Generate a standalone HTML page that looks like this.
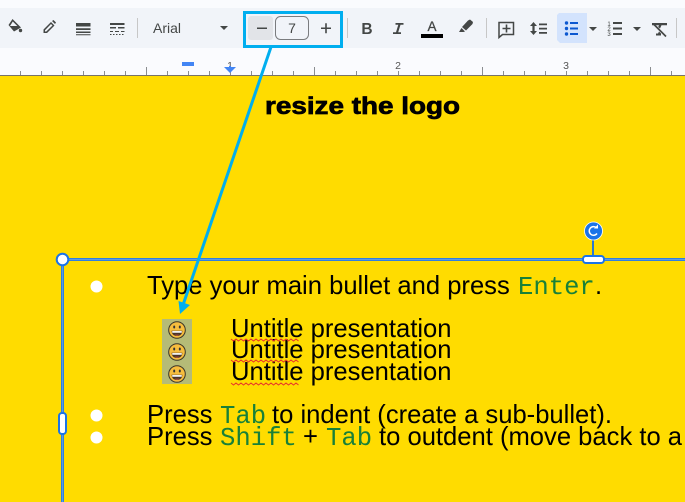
<!DOCTYPE html>
<html><head><meta charset="utf-8"><style>
html,body{margin:0;padding:0;width:685px;height:502px;overflow:hidden;background:#ffdc00}
svg{display:block}
text{font-family:"Liberation Sans",Arial,sans-serif}
.m{font-family:"Liberation Mono",monospace;fill:#188038}
.t{font-size:25.6px;fill:#000}
</style></head><body>
<svg width="685" height="502" viewBox="0 0 685 502" xmlns="http://www.w3.org/2000/svg">
<defs>
<g id="em">
<circle cx="0" cy="0" r="8.300" fill="#f6bd3e" stroke="#3a3428" stroke-width="1"/>
<ellipse cx="-2.800" cy="-3" rx="1" ry="1.500" fill="#333"/><ellipse cx="2.800" cy="-3" rx="1" ry="1.500" fill="#333"/>
<path d="M-5.400 0.800H5.400C5.200 4.400 3 6 0 6S-5.200 4.400-5.400 0.800Z" fill="#4a3528"/>
<path d="M-4.800 1H4.800V2.800H-4.800Z" fill="#f2f2f2"/><path d="M-2.400 4.700H2.400L0 5.800Z" fill="#e0504a"/>
</g>
<path id="sq" fill="none" stroke="#e8342a" stroke-width="1" d="M231 339l2.500 2 2.500-2 2.500 2 2.500-2 2.500 2 2.500-2 2.500 2 2.500-2 2.500 2 2.500-2 2.500 2 2.500-2 2.500 2 2.500-2 2.500 2 2.500-2 2.500 2 2.500-2 2.500 2 2.500-2 2.500 2 2.500-2 2.500 2 2.500-2 2.500 2 2.500-2 2.500 2"/>
</defs>

<!-- chrome -->
<rect width="685" height="8" fill="#fafbfe"/>
<rect y="8" width="685" height="40" fill="#f1f4f9"/>
<rect y="48" width="685" height="27" fill="#fafbfe"/>
<rect y="75" width="685" height="1" fill="#77736a"/>
<rect y="76" width="685" height="426" fill="#ffdc00"/>

<!-- ruler ticks -->
<path stroke="#8a8d90" stroke-width="1" fill="none" d="M20.500 71V75M41.500 71V75M62.500 71V75M83.500 71V75M104.500 71V75M125.500 71V75M146.500 67V75M167.500 71V75M188.500 71V75M209.500 71V75M230.500 71V75M251.500 71V75M272.500 71V75M293.500 71V75M314.500 67V75M335.500 71V75M356.500 71V75M377.500 71V75M398.500 71V75M419.500 71V75M440.500 71V75M461.500 71V75M482.500 67V75M503.500 71V75M524.500 71V75M545.500 71V75M566.500 71V75M587.500 71V75M608.500 71V75M629.500 71V75M650.500 67V75M671.500 71V75"/>
<text x="230" y="69" font-size="10.500" fill="#555" text-anchor="middle">1</text>
<text x="398" y="69" font-size="10.500" fill="#555" text-anchor="middle">2</text>
<text x="566" y="69" font-size="10.500" fill="#555" text-anchor="middle">3</text>
<rect x="182" y="62" width="12" height="4" fill="#4285f4"/>
<path d="M224 67H236L230 73Z" fill="#4285f4"/>
<rect x="229" y="66" width="2" height="3" fill="#4285f4"/>

<!-- toolbar icons -->
<g fill="#444746" stroke="none">
<!-- paint -->
<path d="M12.500 19L8.500 25 14 31.500 21 27.500ZM12.800 21.500L17.300 26H10Z" fill-rule="evenodd"/>
<path d="M9.800 26H19.500L14.500 31Z"/>
<circle cx="20.500" cy="30.500" r="1.700"/>
<!-- pencil -->
<path d="M43.500 33V29.500L51 22 54.500 25.500 47 33ZM45 31.500H46.300L52.500 25.500 51 24 45 30.200Z" fill-rule="evenodd"/>
<path d="M52 21L53.500 20 56 22.500 55 24Z"/>
<!-- border weight -->
<path d="M76 23H90.500V26.500H76ZM76 28.300H90.500V30H76ZM76 31.500H90.500V33H76ZM76 34.300H90.500V35.200H76Z"/>
<!-- border dash -->
<path d="M110 23H124.500V25H110ZM110 27H116V28.500H110ZM118 27H124.500V28.500H118ZM110 31H113V32H110ZM115 31H119V32H115ZM121 31H124.500V32H121ZM110 34H111.500V35H110ZM113 34H114.500V35H113ZM116 34H117.500V35H116ZM119 34H120.500V35H119ZM122 34H123.500V35H122Z"/>
</g>
<rect x="137" y="18" width="1" height="20" fill="#c7c7c7"/>
<text x="153" y="33" font-size="14" fill="#444746">Arial</text>
<path d="M220 26H228L224 30Z" fill="#444746"/>

<!-- font size box -->
<rect x="248" y="16" width="25" height="24" rx="3" fill="#e2e4e8"/>
<rect x="257" y="27.500" width="10" height="1.500" fill="#444746"/>
<rect x="275.500" y="16.500" width="33" height="23" rx="5" fill="none" stroke="#7a7c7f" stroke-width="1"/>
<text x="292" y="33" font-size="14" fill="#444746" text-anchor="middle">7</text>
<path d="M321 27.500H331V29H321ZM325.200 23.300H326.800V33.200H325.200Z" fill="#444746"/>
<rect x="244.500" y="12.500" width="97" height="34" fill="none" stroke="#00aeef" stroke-width="3"/>

<rect x="347" y="18" width="1" height="20" fill="#c7c7c7"/>
<text x="367" y="34" font-size="15.500" font-weight="bold" fill="#444746" text-anchor="middle">B</text>
<path d="M395.500 23H403.500V24.700H400.500L398.200 32.300H401V34H393V32.300H396L398.300 24.700H395.500Z" fill="#444746"/>
<text x="432" y="31" font-size="13.500" fill="#444746" stroke="#444746" stroke-width="0.300" text-anchor="middle">A</text>
<rect x="421" y="34" width="22" height="4" fill="#000"/>
<!-- highlighter -->
<path d="M462 27L468 20.500 470 19.500 473 22 472.500 24 466 30.500Z" fill="#444746"/>
<path d="M461.500 28L465 31.500 463.500 32H459Z" fill="#444746"/>
<rect x="486" y="18" width="1" height="20" fill="#c7c7c7"/>
<!-- comment -->
<path d="M499 22.500H513.500V34.500H502.500L499 37.500Z" fill="none" stroke="#444746" stroke-width="1.500"/>
<path d="M505.700 24.500H507.300V27.700H510.500V29.300H507.300V32.500H505.700V29.300H502.500V27.700H505.700Z" fill="#444746"/>
<!-- line spacing -->
<path d="M533.500 22L537 26H534.600V31H537L533.500 35 530 31H532.400V26H530Z" fill="#444746"/>
<path d="M539 23.500H547V25.300H539ZM539 27.700H547V29.500H539ZM539 32H547V33.800H539Z" fill="#444746"/>
<!-- bullets active -->
<path d="M559 13H587V43H560L557 40V15Z" fill="#d3e3fd"/>
<g fill="#0b57d0"><circle cx="566.500" cy="23" r="1.700"/><circle cx="566.500" cy="28.500" r="1.700"/><circle cx="566.500" cy="34" r="1.700"/><path d="M570 22H578V24H570ZM570 27.500H578V29.500H570ZM570 33H578V35H570Z"/></g>
<path d="M589 27H597L593 31Z" fill="#444746"/>
<!-- numbered -->
<text x="609" y="26" font-size="6" fill="#444746" text-anchor="middle">1</text>
<text x="609" y="31" font-size="6" fill="#444746" text-anchor="middle">2</text>
<text x="609" y="36" font-size="6" fill="#444746" text-anchor="middle">3</text>
<path d="M613 22H622V24H613ZM613 27.500H622V29.500H613ZM613 33H622V35H613Z" fill="#444746"/>
<path d="M633 27H641L637 31Z" fill="#444746"/>
<!-- clear formatting -->
<path d="M652 23H667V25.200H661.500L660 28.500 658.200 27 659 25.200H652Z" fill="#444746"/>
<path d="M653.500 24L666 36.500" stroke="#444746" stroke-width="1.700"/>
<path d="M656 35.500H661V33.500L659 31.500 658 33.500H656Z" fill="#444746"/>
<rect x="676" y="18" width="1" height="20" fill="#c7c7c7"/>

<!-- slide content -->
<text x="265" y="114" font-size="24" font-weight="bold" fill="#000" stroke="#000" stroke-width="0.700" textLength="195" lengthAdjust="spacingAndGlyphs">resize the logo</text>

<!-- selection -->
<path d="M62.500 259.500H685M62.500 259.500V502" stroke="#2f7fe0" stroke-width="3" fill="none"/>
<path d="M62.500 259.500H685M62.500 259.500V502" stroke="#5f9be0" stroke-width="1" fill="none"/>
<circle cx="62.500" cy="259.500" r="5.800" fill="#fff" stroke="#1a73e8" stroke-width="2"/>
<rect x="592" y="238" width="2" height="20" fill="#2b78d0"/>
<circle cx="593.500" cy="231" r="9" fill="#1a73e8" stroke="#fff" stroke-width="0.800"/>
<path d="M597 233.500A4.300 4.300 0 1 1 596.500 227.800" fill="none" stroke="#fff" stroke-width="1.500"/>
<path d="M594 228.500H598V224.500Z" fill="#fff"/>
<rect x="583" y="256" width="21" height="7" rx="3" fill="#fff" stroke="#1a73e8" stroke-width="2"/>
<rect x="59" y="413" width="7" height="21" rx="3" fill="#fff" stroke="#1a73e8" stroke-width="2"/>

<!-- bullets -->
<circle cx="96.500" cy="286.500" r="6" fill="#fff"/>
<circle cx="96.500" cy="415.500" r="6" fill="#fff"/>
<circle cx="96.500" cy="437.500" r="6" fill="#fff"/>

<text class="t" x="147" y="294">Type your main bullet and press <tspan class="m" x="518">Enter</tspan><tspan x="595">.</tspan></text>

<rect x="162" y="319" width="30" height="65" fill="#b5bb77"/>
<use href="#em" x="177" y="330"/>
<use href="#em" x="177" y="352"/>
<use href="#em" x="177" y="374"/>

<text class="t" x="231" y="337">Untitle presentation</text>
<text class="t" x="231" y="358">Untitle presentation</text>
<text class="t" x="231" y="380">Untitle presentation</text>
<use href="#sq"/>
<use href="#sq" y="21"/>
<use href="#sq" y="44"/>

<text class="t" x="147" y="423">Press <tspan class="m" x="220">Tab</tspan><tspan x="272">to indent (create a sub-bullet).</tspan></text>
<text class="t" x="147" y="445">Press <tspan class="m" x="220">Shift</tspan><tspan x="303">+</tspan><tspan class="m" x="326">Tab</tspan><tspan x="379">to outdent (move back to a</tspan></text>

<!-- arrow -->
<path d="M271 47L183 305" stroke="#00aeef" stroke-width="3" fill="none"/>
<path d="M180 314L178.500 301 190 305Z" fill="#00aeef"/>
</svg>
</body></html>
